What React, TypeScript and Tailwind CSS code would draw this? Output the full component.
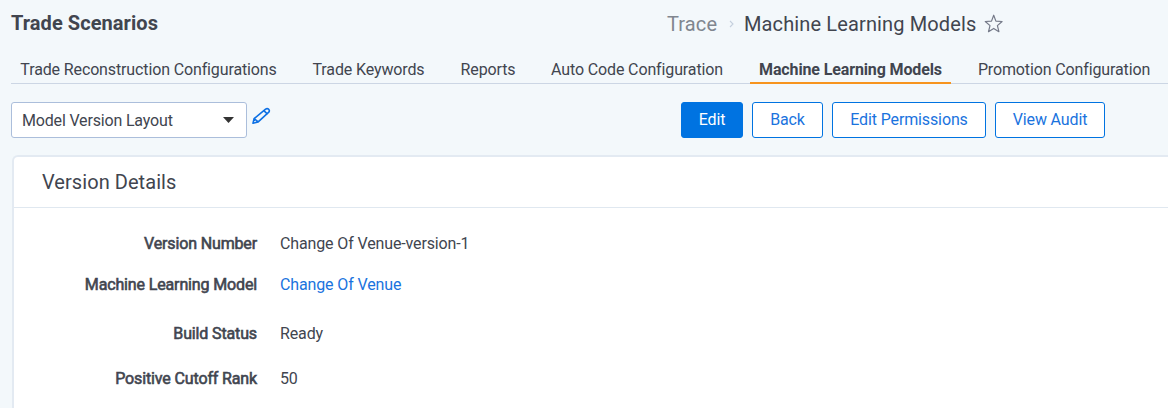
import React from 'react';

const tabs = [
  { label: 'Trade Reconstruction Configurations', cls: 'w-[275px]' },
  { label: 'Trade Keywords', cls: 'w-[131px] ml-[17px]' },
  { label: 'Reports', cls: 'w-[74px] ml-[17px]' },
  { label: 'Auto Code Configuration', cls: 'w-[190px] ml-[17px]' },
  { label: 'Machine Learning Models', cls: 'w-[201px] ml-[18px]', active: true },
  { label: 'Promotion Configuration', cls: 'w-[190px] ml-[18px]' },
];

const buttons = [
  { label: 'Edit', cls: 'w-[62px] bg-[#0073e1] text-white' },
  { label: 'Back', cls: 'w-[71px] bg-white text-[#1a73de]' },
  { label: 'Edit Permissions', cls: 'w-[154px] bg-white text-[#1a73de]' },
  { label: 'View Audit', cls: 'w-[110px] bg-white text-[#1a73de]' },
];

const rows = [
  { label: 'Version Number', value: 'Change Of Venue-version-1', cls: 'h-[41px]' },
  { label: 'Machine Learning Model', value: 'Change Of Venue', link: true, cls: 'h-[49px]' },
  { label: 'Build Status', value: 'Ready', cls: 'h-[45px]' },
  { label: 'Positive Cutoff Rank', value: '50', cls: 'h-[24px]' },
];

export default function App() {
  return (
    <div className="h-[408px] w-[1168px] overflow-hidden bg-[#f3f8fb] font-['Roboto',sans-serif] text-[16px] tracking-[-0.13px] text-[#41454f]">
      <header className="flex h-[47px] pl-[11px]">
        <h1 className="w-[656px] pt-[8px] text-[20px] leading-[30px] font-bold tracking-[0.06px]">Trade Scenarios</h1>
        <div className="flex h-[47px] items-center text-[20px] leading-[30px] tracking-[0.13px] whitespace-nowrap">
          <span className="w-[62px] text-[#80868f]">Trace</span>
          <svg className="mr-[10px] h-[8px] w-[5px]" viewBox="0 0 5 8" fill="none" stroke="#c5d0de" strokeWidth="1.1"><path d="M1 1l3 3-3 3" /></svg>
          <span className="w-[240px]">Machine Learning Models</span>
          <svg className="h-[20px] w-[20px]" viewBox="0 0 20 20" fill="none" stroke="#747988" strokeWidth="1.2" strokeLinejoin="round"><path d="M9.700 1.200l2.200 5.900 6.200.4-4.700 4.100 1.500 6.100-5.200-3.300-5.200 3.300L6 11.600 1.300 7.500l6.200-.4z" /></svg>
        </div>
      </header>
      <nav className="ml-[11px] flex h-[37px] border-b border-[#ccd6e4]">
        {tabs.map((t) => (
          <div key={t.label} className={`${t.cls} flex h-[37px] shrink-0 justify-center border-b-2 pt-[11px] leading-[24px] whitespace-nowrap ${t.active ? 'border-[#f7941e] font-bold' : 'border-transparent'}`}>{t.label}</div>
        ))}
      </nav>
      <div className="flex h-[71px] pt-[18px] pl-[11px]">
        <div className="flex h-[36px] w-[236px] items-center justify-between rounded-[3px] border border-[#abbedb] bg-white pr-[12px] pl-[10px]">
          <span className="pt-[1px] tracking-[-0.17px]">Model Version Layout</span>
          <svg className="h-[6px] w-[11px]" viewBox="0 0 11 6" fill="#333"><path d="M0 0h11L5.500 6z" /></svg>
        </div>
        <svg className="mt-[5px] ml-[5px] h-[19px] w-[20px]" viewBox="0 0 20 19" fill="none" stroke="#0d70e4" strokeWidth="1.6" strokeLinejoin="round" strokeLinecap="round"><path d="M1 16.200l1.100-4.600L13.600 2.100Q15.200 1 16.600 2.200Q18 3.700 16.800 5.200L6.200 14.900zM11.800 3.600l3.500 3.200M2.100 11.600l4.100 3.300" /></svg>
        <div className="ml-[409px] flex gap-[9px]">
          {buttons.map((b) => (
            <button key={b.label} className={`${b.cls} h-[36px] rounded-[3px] border border-[#0073e1] whitespace-nowrap`}>{b.label}</button>
          ))}
        </div>
      </div>
      <main className="ml-[12px] h-[260px] rounded-tl-[6px] border-t-2 border-l-2 border-[#e3eaf2] bg-white">
        <h2 className="h-[51px] border-b border-[#e0e8f0] pl-[28px] text-[20px] leading-[51px] tracking-[0.06px]">Version Details</h2>
        <dl className="pt-[24px]">
          {rows.map((r) => (
            <div key={r.label} className={`${r.cls} flex leading-[24px]`}>
              <dt className="w-[243px] text-right tracking-[-0.14px] [-webkit-text-stroke:0.6px_#41454f]">{r.label}</dt>
              <dd className={`ml-[23px] ${r.link ? 'text-[#1a73de]' : ''}`}>{r.value}</dd>
            </div>
          ))}
        </dl>
      </main>
    </div>
  );
}
